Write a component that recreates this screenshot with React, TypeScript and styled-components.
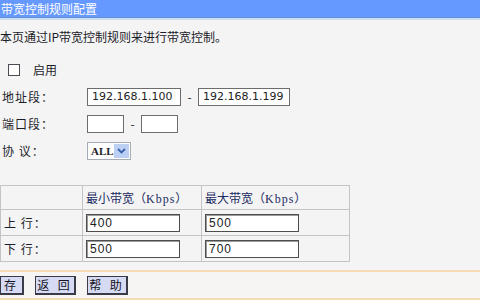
import React from 'react';
import styled, { createGlobalStyle } from 'styled-components';

const GlobalStyle = createGlobalStyle`
  html, body {
    margin: 0;
    padding: 0;
    background: #f4f4f5;
  }
  body {
    font-family: "Noto Sans CJK SC", "DejaVu Sans", sans-serif;
    font-size: 12px;
    color: #1e1e2a;
  }
`;

const Page = styled.div`
  width: 480px;
  height: 300px;
  overflow: hidden;
  background: #f4f4f5;
`;

const TitleBar = styled.div`
  height: 17px;
  line-height: 17px;
  background: #6699ff;
  color: #ffffff;
  font-size: 12px;
  padding-left: 1px;
  border-bottom: 1px solid #6d8fcf;
  box-shadow: 0 2px 0 #c8def4;
`;

const Intro = styled.div`
  height: 38px;
  line-height: 38px;
`;

const Form = styled.div`
  display: flex;
  flex-direction: column;
`;

const Row = styled.div`
  display: flex;
  align-items: center;
  height: 27px;
`;

const Label = styled.div`
  width: 85px;
  padding-left: 2px;
  letter-spacing: 1px;
`;

const Check = styled.span`
  display: inline-block;
  width: 10px;
  height: 10px;
  border: 1px solid #4a4a55;
  background: #ffffff;
  margin: 0 13px 0 8px;
`;

const TextBox = styled.div<{ $w: number }>`
  width: ${(p) => p.$w}px;
  height: 16px;
  box-sizing: content-box;
  border: 1px solid #6c6c6c;
  background: #ffffff;
  font-family: "DejaVu Sans", sans-serif;
  font-size: 11px;
  line-height: 16px;
  padding-left: 4px;
  color: #222;
`;

const Dash = styled.span<{ $gap: number }>`
  display: inline-block;
  width: ${(p) => p.$gap}px;
  text-align: center;
`;

const Select = styled.div`
  display: flex;
  align-items: center;
  width: 42px;
  height: 16px;
  border: 1px solid #a6acb6;
  background: #ffffff;
`;

const SelectText = styled.span`
  flex: 1;
  padding-left: 3px;
  font-family: "Liberation Serif", serif;
  font-weight: bold;
  font-size: 11px;
  line-height: 16px;
`;

const SelectArrow = styled.span`
  width: 15px;
  height: 14px;
  margin-right: 1px;
  background: #bcd0f4;
  display: flex;
  align-items: center;
  justify-content: center;
`;

const Table = styled.table`
  margin-top: 21px;
  width: 350px;
  border-collapse: collapse;
  border: 1px solid #a8a8a8;
`;

const Cell = styled.td<{ $w?: number; $head?: boolean }>`
  ${(p) => (p.$w ? `width: ${p.$w}px;` : '')}
  height: ${(p) => (p.$head ? 23 : 25)}px;
  padding: 0 0 0 3px;
  border: 1px solid #c4c4c4;
  color: ${(p) => (p.$head ? '#1b2a62' : '#1e1e2a')};
  letter-spacing: ${(p) => (p.$head ? 0 : 1)}px;
  white-space: nowrap;
`;

const Kbps = styled.span`
  font-family: "Liberation Serif", serif;
  font-size: 12px;
  letter-spacing: 1px;
`;

const CellBox = styled(TextBox)`
  border-color: #4d4d4d;
  box-shadow: inset 1px 1px 0 #9a9a9a;
  font-family: "Liberation Sans", sans-serif;
  font-size: 12px;
  padding-left: 3px;
`;

const Footer = styled.div`
  margin-top: 8px;
  border-top: 2px solid #f6dcb4;
  border-bottom: 2px solid #f6dcb4;
  background: #f7f4f4;
  height: 26px;
  display: flex;
  align-items: center;
  gap: 11px;
`;

const Button = styled.div<{ $w: number }>`
  width: ${(p) => p.$w}px;
  height: 16px;
  border: 1px solid #3a3a48;
  border-right-width: 2px;
  border-bottom-width: 2px;
  background: #d6daf2;
  text-align: center;
  line-height: 16px;
  font-size: 12px;
  letter-spacing: 3px;
  color: #14141e;
`;

export default function App() {
  return (
    <Page>
      <GlobalStyle />
      <TitleBar>带宽控制规则配置</TitleBar>
      <Intro>本页通过IP带宽控制规则来进行带宽控制。</Intro>
      <Form>
        <Row>
          <Check />
          <span>启用</span>
        </Row>
        <Row>
          <Label>地址段：</Label>
          <TextBox $w={88}>192.168.1.100</TextBox>
          <Dash $gap={17}>-</Dash>
          <TextBox $w={86}>192.168.1.199</TextBox>
        </Row>
        <Row>
          <Label>端口段：</Label>
          <TextBox $w={31} />
          <Dash $gap={17}>-</Dash>
          <TextBox $w={31} />
        </Row>
        <Row>
          <Label>协 议：</Label>
          <Select>
            <SelectText>ALL</SelectText>
            <SelectArrow>
              <svg width="9" height="6" viewBox="0 0 9 6">
                <path d="M1 1 L4.5 4.5 L8 1" stroke="#3a5fb0" strokeWidth="1.8" fill="none" />
              </svg>
            </SelectArrow>
          </Select>
        </Row>
      </Form>
      <Table>
        <tbody>
          <tr>
            <Cell $w={78} $head />
            <Cell $w={115} $head>
              最小带宽（<Kbps>Kbps</Kbps>）
            </Cell>
            <Cell $head>
              最大带宽（<Kbps>Kbps</Kbps>）
            </Cell>
          </tr>
          <tr>
            <Cell>上 行：</Cell>
            <Cell>
              <CellBox $w={89}>400</CellBox>
            </Cell>
            <Cell>
              <CellBox $w={89}>500</CellBox>
            </Cell>
          </tr>
          <tr>
            <Cell>下 行：</Cell>
            <Cell>
              <CellBox $w={89}>500</CellBox>
            </Cell>
            <Cell>
              <CellBox $w={89}>700</CellBox>
            </Cell>
          </tr>
        </tbody>
      </Table>
      <Footer>
        <Button $w={21}>存</Button>
        <Button $w={38}>返 回</Button>
        <Button $w={38}>帮 助</Button>
      </Footer>
    </Page>
  );
}
